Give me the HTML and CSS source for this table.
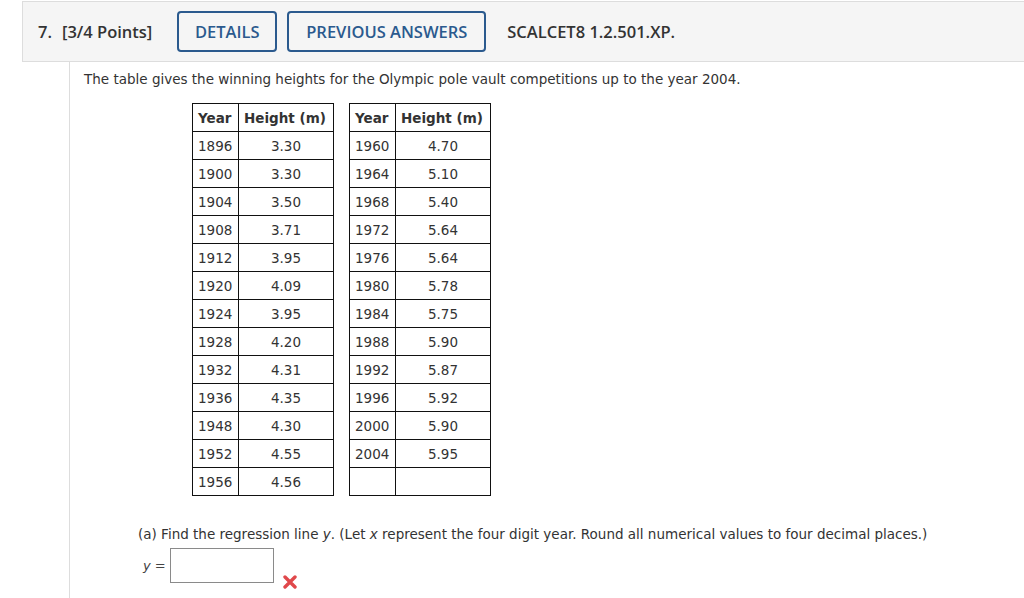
FILE: index.html
```html
<!DOCTYPE html>
<html>
<head>
<meta charset="utf-8">
<link rel="stylesheet" href="styles.css">
</head>
<body>
<div class="qhead">
  <span class="qnum">7.</span>
  <span class="qpts">[3/4 Points]</span>
  <button class="btn btn-details">DETAILS</button>
  <button class="btn btn-prev">PREVIOUS ANSWERS</button>
  <span class="qcode">SCALCET8 1.2.501.XP.</span>
</div>
<div class="qbody">
  <p class="intro">The table gives the winning heights for the Olympic pole vault competitions up to the year 2004.</p>
  <div class="tables">
    <table class="data">
      <tr><th>Year</th><th>Height (m)</th></tr>
      <tr><td>1896</td><td>3.30</td></tr>
      <tr><td>1900</td><td>3.30</td></tr>
      <tr><td>1904</td><td>3.50</td></tr>
      <tr><td>1908</td><td>3.71</td></tr>
      <tr><td>1912</td><td>3.95</td></tr>
      <tr><td>1920</td><td>4.09</td></tr>
      <tr><td>1924</td><td>3.95</td></tr>
      <tr><td>1928</td><td>4.20</td></tr>
      <tr><td>1932</td><td>4.31</td></tr>
      <tr><td>1936</td><td>4.35</td></tr>
      <tr><td>1948</td><td>4.30</td></tr>
      <tr><td>1952</td><td>4.55</td></tr>
      <tr><td>1956</td><td>4.56</td></tr>
    </table>
    <table class="data">
      <tr><th>Year</th><th>Height (m)</th></tr>
      <tr><td>1960</td><td>4.70</td></tr>
      <tr><td>1964</td><td>5.10</td></tr>
      <tr><td>1968</td><td>5.40</td></tr>
      <tr><td>1972</td><td>5.64</td></tr>
      <tr><td>1976</td><td>5.64</td></tr>
      <tr><td>1980</td><td>5.78</td></tr>
      <tr><td>1984</td><td>5.75</td></tr>
      <tr><td>1988</td><td>5.90</td></tr>
      <tr><td>1992</td><td>5.87</td></tr>
      <tr><td>1996</td><td>5.92</td></tr>
      <tr><td>2000</td><td>5.90</td></tr>
      <tr><td>2004</td><td>5.95</td></tr>
      <tr><td>&nbsp;</td><td>&nbsp;</td></tr>
    </table>
  </div>
  <div class="part">
    <p class="ptext">(a) Find the regression line <i>y</i>. (Let <i>x</i> represent the four digit year. Round all numerical values to four decimal places.)</p>
    <div class="answer">
      <span class="lbl"><i>y</i> =</span>
      <span class="box"></span>
      <svg class="wrong" width="14" height="14" viewBox="0 0 14 14"><path d="M2 2 L12 12 M12 2 L2 12" stroke="#e0484b" stroke-width="3.4" stroke-linecap="round"/></svg>
    </div>
  </div>
</div>
</body>
</html>
```
FILE: styles.css
```css
html, body { margin: 0; padding: 0; background: #fff; overflow: hidden; }
body { font-family: "DejaVu Sans", Verdana, sans-serif; color: #333; }

.qhead {
  margin: 1px 0 0 22px;
  height: 59px;
  background: #f5f5f5;
  border: 1px solid #dddddd;
  border-right: none;
  display: flex;
  align-items: center;
  font-family: "Open Sans", sans-serif;
  font-weight: 600;
  font-size: 16.5px;
  color: #333;
  padding-left: 15px;
}
.qnum { margin-right: 10px; }
.qpts { margin-right: 25px; }
.btn {
  font-family: "Open Sans", sans-serif;
  font-weight: 600;
  font-size: 16.5px;
  color: #2b5a8e;
  background: #f5f5f5;
  border: 2px solid #2b5a8e;
  border-radius: 4px;
  height: 41px;
  padding: 0;
  margin-right: 10px;
  cursor: pointer;
}
.btn-details { width: 100px; }
.btn-prev { width: 199px; margin-right: 21px; }
.qcode { color: #333; }

.qbody {
  margin-left: 69px;
  border-left: 1px solid #dddddd;
  padding-left: 14px;
  padding-top: 1px;
  height: 600px;
}
.intro {
  margin: 7px 0 0 0;
  font-size: 13.5px;
  line-height: 18px;
  color: #333;
}
.tables {
  display: flex;
  gap: 15px;
  margin: 15px 0 0 108px;
  align-items: flex-start;
}
.data {
  border-collapse: collapse;
  font-size: 13.5px;
  color: #333;
}
.data th, .data td {
  border: 1px solid #111;
  height: 28px;
  box-sizing: border-box;
  padding: 0 5px;
}
.data th {
  font-weight: bold;
  text-align: left;
  padding: 0 5px;
}
.data td:first-child { width: 46px; text-align: left; }
.data td:last-child { width: 95px; text-align: center; }

.part { margin: 29px 0 0 54px; }
.ptext {
  margin: 0;
  font-size: 13.5px;
  line-height: 18px;
  color: #333;
}
.answer {
  display: flex;
  align-items: flex-start;
  margin-top: 5px;
}
.lbl {
  font-size: 13px;
  color: #444;
  margin: 10px 4px 0 5px;
}
.box {
  width: 102px;
  height: 33px;
  border: 1px solid #8a8a8a;
  background: #fff;
  display: inline-block;
}
.wrong { margin: 27px 0 0 9px; }
```
